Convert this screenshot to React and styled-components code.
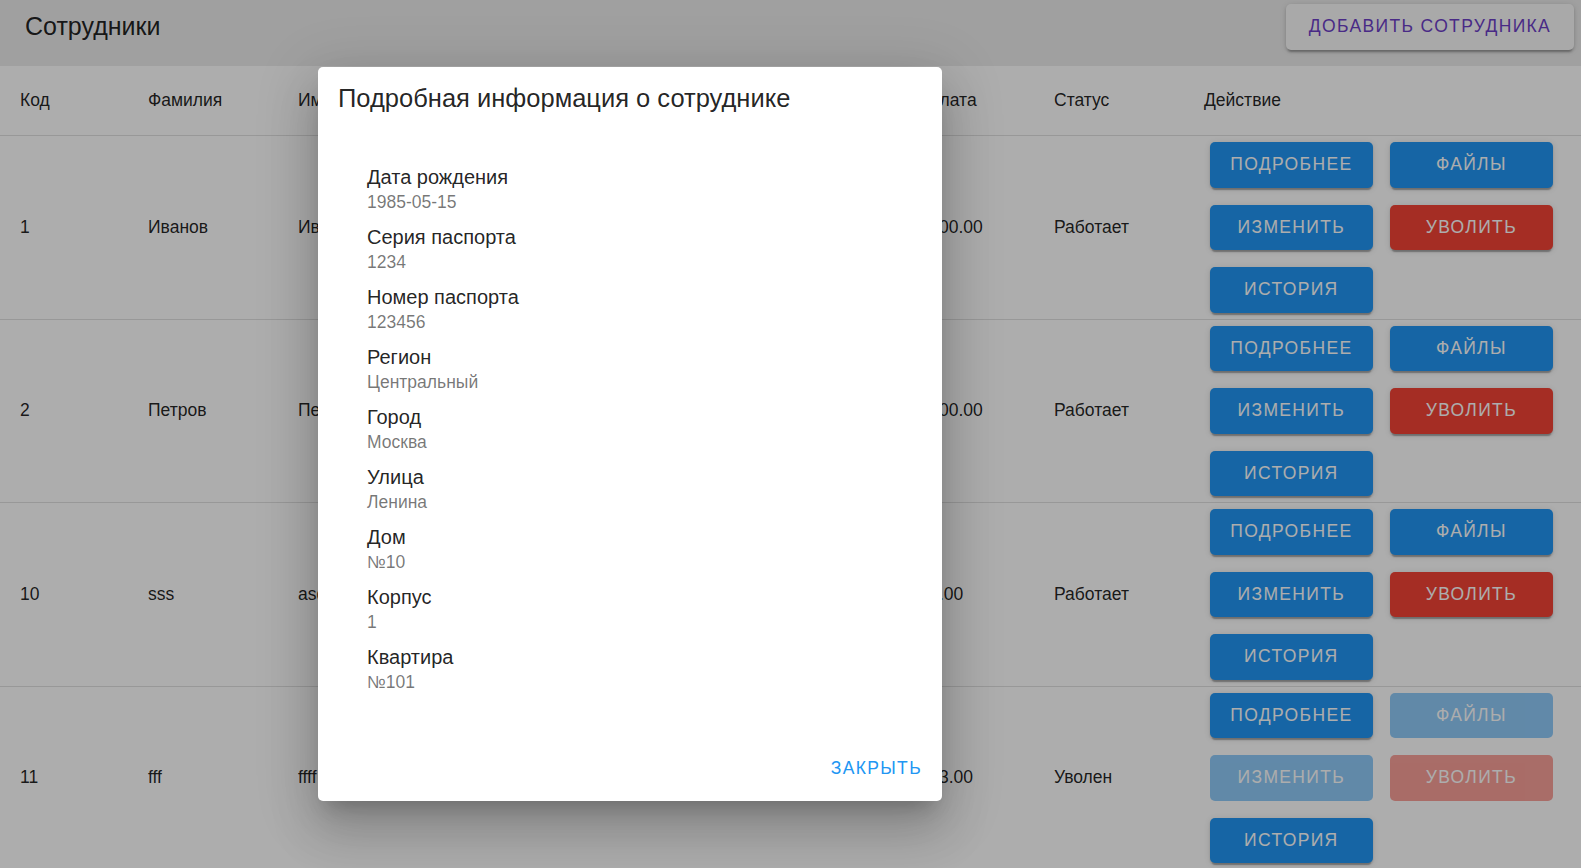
import styled, { createGlobalStyle } from "styled-components";

const GlobalStyle = createGlobalStyle`
    html, body {
        margin: 0;
        padding: 0;
        overflow: hidden;
    }

    body {
        font-family: "Liberation Sans", Arial, sans-serif;
        background: #fff;
        color: rgba(0, 0, 0, 0.87);
    }
`

const Page = styled.div`
    width: 1581px;
    height: 868px;
    overflow: hidden;
    position: relative;
`

const TopBar = styled.header`
    height: 66px;
    box-sizing: border-box;
    background: #ececec;
    display: flex;
    justify-content: space-between;
    align-items: flex-start;
    padding: 4px 7px 0 25px;
`

const PageTitle = styled.h1`
    margin: 0;
    font-size: 25px;
    font-weight: 400;
    line-height: 45px;
    color: rgba(0, 0, 0, 0.87);
`

const buttonText = `
    font-family: "Liberation Sans", Arial, sans-serif;
    font-size: 17.5px;
    letter-spacing: 1.35px;
    text-transform: uppercase;
    border: 0;
    border-radius: 5px;
    height: 45.5px;
    cursor: pointer;
`

const AddButton = styled.button`
    ${buttonText};
    width: 288px;
    background: #fafafa;
    color: #6c3fc6;
    box-shadow: 0 4px 2px -2px rgba(0, 0, 0, 0.2), 0 2px 3px 0 rgba(0, 0, 0, 0.14), 0 1px 6px 0 rgba(0, 0, 0, 0.12);
`

const Table = styled.table`
    width: 100%;
    table-layout: fixed;
    border-collapse: collapse;
    font-size: 17.5px;
`

const HeadCell = styled.th`
    height: 69px;
    padding: 0 20px;
    text-align: left;
    font-weight: 400;
    border-bottom: 1px solid #e0e0e0;
    white-space: nowrap;
    overflow: hidden;
`

const Cell = styled.td`
    padding: 0 20px;
    border-bottom: 1px solid #e0e0e0;
    vertical-align: middle;
    white-space: nowrap;
    overflow: hidden;
`

const ActionCell = styled.td`
    padding: 6px 20px 6px 26px;
    border-bottom: 1px solid #e0e0e0;
`

const ActionGrid = styled.div`
    display: grid;
    grid-template-columns: 162.7px 162.7px;
    column-gap: 17.3px;
    row-gap: 17px;
`

const ActionButton = styled.button`
    ${buttonText};
    color: #fff;
    background: ${p => (p.$danger ? "#f44336" : "#2196f3")};
    box-shadow: 0 4px 1px -2px rgba(0, 0, 0, 0.2), 0 2px 2px 0 rgba(0, 0, 0, 0.14), 0 1px 6px 0 rgba(0, 0, 0, 0.12);

    &:disabled {
        opacity: 0.5;
        box-shadow: none;
        cursor: default;
    }
`

const Backdrop = styled.div`
    position: absolute;
    inset: 0;
    background: rgba(0, 0, 0, 0.32);
`

const Dialog = styled.div`
    position: absolute;
    left: 318px;
    top: 67px;
    width: 624px;
    height: 734px;
    box-sizing: border-box;
    background: #fff;
    border-radius: 5px;
    display: flex;
    flex-direction: column;
    box-shadow: 0 14px 19px -9px rgba(0, 0, 0, 0.2), 0 30px 48px 4px rgba(0, 0, 0, 0.14), 0 11px 58px 10px rgba(0, 0, 0, 0.12);
`

const DialogTitle = styled.h2`
    margin: 0;
    padding: 16px 20px 0;
    font-size: 25.5px;
    font-weight: 400;
    line-height: 30px;
    color: rgba(0, 0, 0, 0.87);
`

const DialogContent = styled.ul`
    flex: 1;
    margin: 0;
    list-style: none;
    padding: 45.5px 0 0 49px;
`

const Field = styled.li`
    padding: 5px 0;
`

const FieldLabel = styled.div`
    font-size: 20px;
    line-height: 26px;
    color: rgba(0, 0, 0, 0.87);
`

const FieldValue = styled.div`
    font-size: 17.5px;
    line-height: 24px;
    color: rgba(0, 0, 0, 0.54);
`

const DialogActions = styled.div`
    display: flex;
    justify-content: flex-end;
    padding: 10px;
`

const TextButton = styled.button`
    ${buttonText};
    background: transparent;
    color: #2196f3;
    padding: 0 10px;
`

const columns = [
    {title: "Код", width: 128},
    {title: "Фамилия", width: 150},
    {title: "Имя", width: 150},
    {title: "Отчество", width: 150},
    {title: "Должность", width: 302},
    {title: "Зарплата", width: 154},
    {title: "Статус", width: 150},
    {title: "Действие"},
]

const employees = [
    {id: 1, last: "Иванов", first: "Иван", middle: "Иванович", position: "Менеджер", salary: "100000.00", status: "Работает"},
    {id: 2, last: "Петров", first: "Петр", middle: "Петрович", position: "Бухгалтер", salary: "120000.00", status: "Работает"},
    {id: 10, last: "sss", first: "asd", middle: "sss", position: "sss", salary: "1000.00", status: "Работает"},
    {id: 11, last: "fff", first: "ffff", middle: "fff", position: "fff", salary: "12333.00", status: "Уволен", fired: true},
]

const details = [
    ["Дата рождения", "1985-05-15"],
    ["Серия паспорта", "1234"],
    ["Номер паспорта", "123456"],
    ["Регион", "Центральный"],
    ["Город", "Москва"],
    ["Улица", "Ленина"],
    ["Дом", "№10"],
    ["Корпус", "1"],
    ["Квартира", "№101"],
]

function App() {
    return (
        <Page>
            <GlobalStyle/>
            <TopBar>
                <PageTitle>Сотрудники</PageTitle>
                <AddButton>Добавить сотрудника</AddButton>
            </TopBar>
            <Table>
                <colgroup>
                    {columns.map(c => (
                        <col key={c.title} style={c.width ? {width: c.width} : undefined}/>
                    ))}
                </colgroup>
                <thead>
                <tr>
                    {columns.map(c => <HeadCell key={c.title}>{c.title}</HeadCell>)}
                </tr>
                </thead>
                <tbody>
                {employees.map(e => (
                    <tr key={e.id}>
                        <Cell>{e.id}</Cell>
                        <Cell>{e.last}</Cell>
                        <Cell>{e.first}</Cell>
                        <Cell>{e.middle}</Cell>
                        <Cell>{e.position}</Cell>
                        <Cell>{e.salary}</Cell>
                        <Cell>{e.status}</Cell>
                        <ActionCell>
                            <ActionGrid>
                                <ActionButton>Подробнее</ActionButton>
                                <ActionButton disabled={e.fired}>Файлы</ActionButton>
                                <ActionButton disabled={e.fired}>Изменить</ActionButton>
                                <ActionButton $danger disabled={e.fired}>Уволить</ActionButton>
                                <ActionButton>История</ActionButton>
                            </ActionGrid>
                        </ActionCell>
                    </tr>
                ))}
                </tbody>
            </Table>

            <Backdrop/>
            <Dialog>
                <DialogTitle>Подробная информация о сотруднике</DialogTitle>
                <DialogContent>
                    {details.map(([label, value]) => (
                        <Field key={label}>
                            <FieldLabel>{label}</FieldLabel>
                            <FieldValue>{value}</FieldValue>
                        </Field>
                    ))}
                </DialogContent>
                <DialogActions>
                    <TextButton>Закрыть</TextButton>
                </DialogActions>
            </Dialog>
        </Page>
    );
}

export default App;
